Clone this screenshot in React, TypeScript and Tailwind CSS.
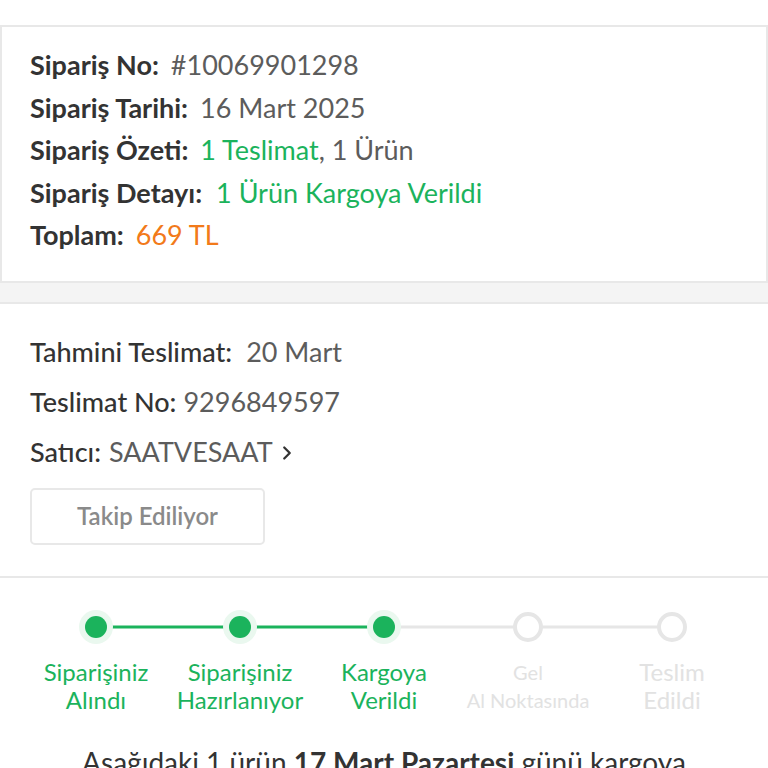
import { ChevronRight } from 'lucide-react';

const STEPS = [
  { lines: ['Siparişiniz', 'Alındı'], done: true },
  { lines: ['Siparişiniz', 'Hazırlanıyor'], done: true },
  { lines: ['Kargoya', 'Verildi'], done: true },
  { lines: ['Gel', 'Al Noktasında'], done: false, small: true },
  { lines: ['Teslim', 'Edildi'], done: false },
];

function Row({ label, gap = 'ml-[12px]', children }: { label: string; gap?: string; children: React.ReactNode }) {
  return (
    <div className="flex items-baseline leading-[42.5px]">
      <span className="font-bold text-[#333333]">{label}</span>
      <span className={`${gap} text-[#5c5c5c]`}>{children}</span>
    </div>
  );
}

export default function App() {
  return (
    <div className="h-screen w-[768px] bg-white font-['Lato','Open_Sans',sans-serif] overflow-hidden">
      <div className="h-[25px] bg-white" />

      {/* Sipariş özeti */}
      <div className="border-[2px] border-[#e8e8e8] bg-white px-[28px] pt-[17px] pb-[24px] text-[27px]">
        <Row label="Sipariş No:">#10069901298</Row>
        <Row label="Sipariş Tarihi:">16 Mart 2025</Row>
        <Row label="Sipariş Özeti:">
          <span className="text-[#1bb35c]">1 Teslimat</span>, 1 Ürün
        </Row>
        <Row label="Sipariş Detayı:" gap="ml-[14px]">
          <span className="text-[#1bb35c]">1 Ürün Kargoya Verildi</span>
        </Row>
        <Row label="Toplam:">
          <span className="text-[#f27a1a]">669 TL</span>
        </Row>
      </div>

      <div className="h-[21px] bg-[#f4f4f4] border-b-[2px] border-[#e8e8e8]" />

      {/* Teslimat */}
      <div className="border-b-[2px] border-[#e8e8e8] px-[30px] pt-[23px] pb-[31px] text-[27px]">
        <div className="leading-[50px]">
          <span className="font-medium text-[#333333]">Tahmini Teslimat:</span>
          <span className="ml-[14px] text-[#5c5c5c]">20 Mart</span>
        </div>
        <div className="leading-[50px]">
          <span className="font-medium text-[#333333]">Teslimat No:</span>
          <span className="ml-[7px] text-[#5c5c5c]">9296849597</span>
        </div>
        <div className="flex items-center leading-[50px]">
          <span className="font-medium text-[#333333]">Satıcı:</span>
          <span className="ml-[8px] text-[#5c5c5c]">SAATVESAAT</span>
          <ChevronRight size={22} strokeWidth={2.5} className="ml-[3px] mt-[2px] text-[#333333]" />
        </div>
        <button className="mt-[11px] flex h-[57px] w-[235px] items-center justify-center rounded-[5px] border-[2px] border-[#e8e8e8] bg-white text-[24px] font-semibold text-[#8a8a8a]">
          Takip Ediliyor
        </button>
      </div>

      {/* Kargo adımları */}
      <div className="px-[24px] pt-[33px]">
        <div className="grid grid-cols-5">
          {STEPS.map((step, i) => {
            const next = STEPS[i + 1];
            return (
              <div key={i} className="flex flex-col items-center">
                <div className="relative flex h-[32px] w-full items-center justify-center">
                  {i > 0 && (
                    <div
                      className={`absolute left-0 right-1/2 top-1/2 h-[3px] -translate-y-1/2 ${
                        step.done ? 'bg-[#1bb35c]' : 'bg-[#e6e6e6]'
                      }`}
                    />
                  )}
                  {next && (
                    <div
                      className={`absolute left-1/2 right-0 top-1/2 h-[3px] -translate-y-1/2 ${
                        next.done ? 'bg-[#1bb35c]' : 'bg-[#e6e6e6]'
                      }`}
                    />
                  )}
                  {step.done ? (
                    <div className="relative z-10 flex h-[34px] w-[34px] items-center justify-center rounded-full bg-[#eaf8ef]">
                      <div className="h-[22px] w-[22px] rounded-full bg-[#1bb35c]" />
                    </div>
                  ) : (
                    <div className="relative z-10 h-[30px] w-[30px] rounded-full border-[4px] border-[#e6e6e6] bg-white" />
                  )}
                </div>
                <div
                  className={`mt-[15px] whitespace-nowrap text-center leading-[28px] ${
                    step.done
                      ? 'text-[24px] text-[#1bb35c]'
                      : step.small
                        ? 'text-[20px] text-[#e2e2e2]'
                        : 'text-[24px] text-[#e2e2e2]'
                  }`}
                >
                  {step.lines.map((l) => (
                    <div key={l}>{l}</div>
                  ))}
                </div>
              </div>
            );
          })}
        </div>

        <p className="mt-[30px] text-center text-[28px] leading-[36px] text-[#333333]">
          Aşağıdaki 1 ürün <span className="font-bold">17 Mart Pazartesi</span> günü kargoya
          <br />
          verildi.
        </p>
      </div>
    </div>
  );
}
